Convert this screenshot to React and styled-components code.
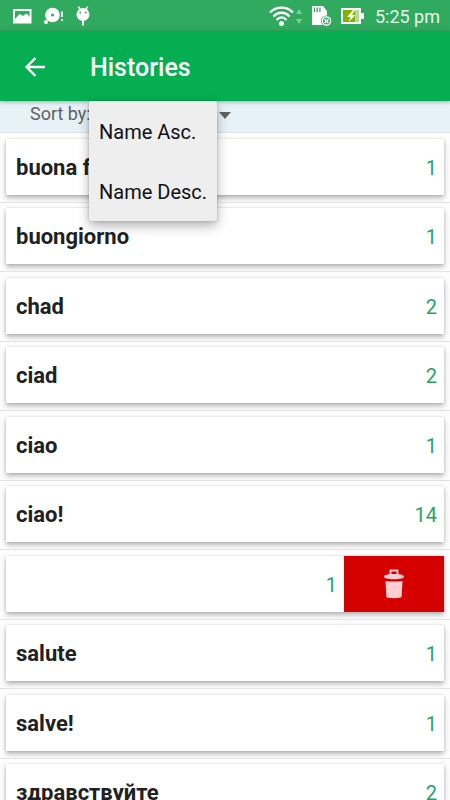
import React, { useState } from 'react';
import styled, { createGlobalStyle } from 'styled-components';

const GlobalStyle = createGlobalStyle`
  * {
    box-sizing: border-box;
  }

  body {
    margin: 0;
    background: #fdfdfd;
    font-family: Roboto, "Noto Sans", sans-serif;
  }

  button {
    border: 0;
    padding: 0;
    background: none;
    font: inherit;
    cursor: pointer;
  }
`;

const Screen = styled.div`
  display: flex;
  flex-direction: column;
  height: 100vh;
  overflow: hidden;
`;

const StatusBar = styled.div`
  display: flex;
  justify-content: space-between;
  align-items: center;
  flex: none;
  height: 31px;
  padding: 0 10px 0 12px;
  background: #30aa5f;
  color: #e8f7ed;

  svg {
    display: block;
  }
`;

const StatusGroup = styled.div`
  display: flex;
  align-items: center;
  gap: ${({ $gap }) => $gap}px;
`;

const Clock = styled.span`
  padding: 2px 0 0 2px;
  font-size: 18px;
  line-height: 22px;
`;

const AppBar = styled.header`
  position: relative;
  z-index: 1;
  display: flex;
  align-items: center;
  flex: none;
  height: 70px;
  padding: 2px 22px 0;
  gap: 42px;
  background: #04ae51;
  color: #fff;
  box-shadow: 0 1px 4px rgba(0, 0, 0, 0.3);
`;

const BackButton = styled.button`
  display: flex;
  color: #fff;
`;

const Title = styled.h1`
  margin: 0;
  padding-top: 2px;
  font-size: 25px;
  font-weight: 500;
  line-height: 30px;
`;

const SortBar = styled.div`
  position: relative;
  z-index: 2;
  display: flex;
  align-items: flex-start;
  flex: none;
  height: 31px;
  padding-left: 30px;
  color: #616161;
  font-size: 18px;
  line-height: 26px;
`;

const SortLabel = styled.span`
  width: 59px;
  white-space: nowrap;
`;

const SortBackground = styled.div`
  flex: none;
  background: #e6f1f8;
`;

const SortPicker = styled.div`
  position: relative;
`;

const SortToggle = styled.button`
  display: flex;
  align-items: center;
  justify-content: flex-end;
  width: 142px;
  height: 28px;
  color: #616161;
`;

const Menu = styled.div`
  position: absolute;
  top: 0;
  left: 0;
  display: flex;
  flex-direction: column;
  border-radius: 2px;
  background: #eee;
  box-shadow: 0 5px 12px rgba(0, 0, 0, 0.3), 0 0 3px rgba(0, 0, 0, 0.2);
`;

const MenuItem = styled.button`
  height: 60px;
  padding: 2px 10px 0;
  color: #111;
  font-size: 20px;
  line-height: 24px;
  text-align: left;
  white-space: nowrap;
`;

const List = styled.ul`
  flex: 1;
  min-height: 0;
  margin: 0;
  padding: 0;
  overflow-y: auto;
  list-style: none;
  scrollbar-width: none;
`;

const Row = styled.li`
  padding: 5px 6px 7px;
  border-top: 1px solid #e2e2e2;

  &:nth-child(odd) {
    padding-top: 6px;
  }
`;

const Card = styled.div`
  display: flex;
  height: 56px;
  background: #fff;
  box-shadow: 0 3px 5px rgba(0, 0, 0, 0.28), 0 0 2px rgba(0, 0, 0, 0.14);
`;

const CardBody = styled.div`
  display: flex;
  flex: 1;
  justify-content: space-between;
  align-items: center;
  padding: 2px 7px 0 10px;
`;

const Word = styled.span`
  color: #212121;
  font-size: 22px;
  font-weight: 700;
  line-height: 28px;
`;

const Count = styled.span`
  color: #1fa566;
  font-size: 20px;
  line-height: 24px;
`;

const DeleteButton = styled.button`
  display: flex;
  align-items: center;
  justify-content: center;
  width: 100px;
  background: #d50000;
`;

const histories = [
  { word: 'buona fortuna', count: 1 },
  { word: 'buongiorno', count: 1 },
  { word: 'chad', count: 2 },
  { word: 'ciad', count: 2 },
  { word: 'ciao', count: 1 },
  { word: 'ciao!', count: 14 },
  { word: '', count: 1, swiped: true },
  { word: 'salute', count: 1 },
  { word: 'salve!', count: 1 },
  { word: 'здравствуйте', count: 2 },
];

const PictureIcon = () => (
  <svg width="20" height="16" viewBox="0 0 20 16">
    <path fill="#fff" fillRule="evenodd" d="M1 1h18.500v14.500H1zM3 3v8l3.500-4c1-1 2-1 3 0l1.500 1 2.500-2c1-.6 1.600-.4 2.300.4L17.500 9V3z" />
  </svg>
);

const DiscIcon = () => (
  <svg width="20" height="18" viewBox="0 0 20 18">
    <circle cx="8.500" cy="8" r="7.300" fill="#fff" />
    <circle cx="8.500" cy="8" r="1.500" fill="#30aa5f" />
    <circle cx="2" cy="15" r="2" fill="#fff" />
    <path fill="#fff" d="M17 4.500h1.800v5.500H17zM17 12h1.800v2H17z" />
  </svg>
);

const DroidIcon = () => (
  <svg width="14" height="20" viewBox="0 0 14 20">
    <path stroke="#fff" strokeWidth="1.400" strokeLinecap="round" d="M2.500 1l2 3M11.500 1l-2 3" />
    <circle cx="7" cy="8.500" r="6.500" fill="#fff" />
    <circle cx="4.200" cy="6.500" r="0.900" fill="#30aa5f" />
    <circle cx="9.800" cy="6.500" r="0.900" fill="#30aa5f" />
    <path stroke="#fff" strokeWidth="2" d="M7 15v4.500" />
  </svg>
);

const WifiIcon = () => (
  <svg width="34" height="22" viewBox="0 0 34 22">
    <g fill="none" stroke="#fff" strokeWidth="2.300">
      <path d="M1 7.500c6-6.500 17-6.500 23 0" />
      <path d="M4.500 11.500c4.500-5 11.500-5 16 0" />
      <path d="M7.500 15c3-3.500 7-3.500 10 0" />
    </g>
    <circle cx="12.500" cy="18.500" r="2.500" fill="#fff" />
    <path fill="#85cda0" d="M30 4l3 5h-6zM30 19l3-5h-6z" />
  </svg>
);

const CardIcon = () => (
  <svg width="21" height="22" viewBox="0 0 21 22">
    <path fill="#fff" d="M1 1h11l4 5v14H1z" />
    <path stroke="#30aa5f" strokeWidth="1.300" d="M3.500 2.500v4.500M6.200 2.500v4.500M8.900 2.500v4.500" />
    <circle cx="15.500" cy="16" r="5.500" fill="#30aa5f" />
    <circle cx="15.500" cy="16" r="4.800" fill="#fff" />
    <circle cx="15.500" cy="16" r="3.500" fill="#30aa5f" />
    <path stroke="#fff" strokeWidth="1.500" d="M13.500 14l4 4M17.500 14l-4 4" />
  </svg>
);

const BatteryIcon = () => (
  <svg width="25" height="18" viewBox="0 0 25 18">
    <path fill="#fff" d="M1 1h20v5h3v6h-3v5H1z" />
    <path fill="#7cb500" d="M3 3h12v12H3z" />
    <path fill="#b2d9a0" d="M15 3h4v12h-4z" />
    <path fill="#fff" d="M13 3l-6 7h3.500l-2 5 7-7H12l3-5z" />
  </svg>
);

const ArrowBackIcon = () => (
  <svg width="26" height="26" viewBox="0 0 26 26">
    <path fill="none" stroke="#fff" strokeWidth="2.400" d="M23 13H5M13.500 4L4.500 13l9 9" />
  </svg>
);

const TrashIcon = () => (
  <svg width="22" height="30" viewBox="0 0 22 30">
    <path
      fill="none"
      stroke="#ffcdd2"
      strokeWidth="1.800"
      d="M7.500 6V1.500h7V6"
    />
    <path
      fill="#ffcdd2"
      d="M1 7.800C1 5.800 5 5 11 5s10 .8 10 2.800c0 1.500-4 2.500-10 2.500S1 9.300 1 7.800zM2.500 12c5.500.8 11.500.8 17 0l-.8 15c-.1 1-.8 1.500-1.700 1.700-4 .6-8 .6-12 0-.9-.2-1.600-.7-1.700-1.700z"
    />
  </svg>
);

const HistoryRow = ({ word, count, swiped }) => (
  <Row>
    <Card>
      <CardBody>
        <Word>{word}</Word>
        <Count>{count}</Count>
      </CardBody>
      {swiped && (
        <DeleteButton type="button" aria-label="Delete">
          <TrashIcon />
        </DeleteButton>
      )}
    </Card>
  </Row>
);

const App = () => {
  const [menuOpen, setMenuOpen] = useState(true);

  return (
    <>
      <GlobalStyle />
      <Screen>
        <StatusBar>
          <StatusGroup $gap={12}>
            <PictureIcon />
            <DiscIcon />
            <DroidIcon />
          </StatusGroup>
          <StatusGroup $gap={8}>
            <WifiIcon />
            <CardIcon />
            <BatteryIcon />
            <Clock>5:25 pm</Clock>
          </StatusGroup>
        </StatusBar>
        <AppBar>
          <BackButton type="button" aria-label="Back">
            <ArrowBackIcon />
          </BackButton>
          <Title>Histories</Title>
        </AppBar>
        <SortBackground>
          <SortBar>
            <SortLabel id="sort-label">Sort by:</SortLabel>
            <SortPicker>
              <SortToggle
                type="button"
                aria-labelledby="sort-label"
                aria-expanded={menuOpen}
                onClick={() => setMenuOpen(!menuOpen)}
              >
                <svg width="12" height="7" viewBox="0 0 12 7">
                  <path fill="#616161" d="M0 0h12L6 7z" />
                </svg>
              </SortToggle>
              {menuOpen && (
                <Menu role="menu">
                  <MenuItem type="button" role="menuitem" onClick={() => setMenuOpen(false)}>
                    Name Asc.
                  </MenuItem>
                  <MenuItem type="button" role="menuitem" onClick={() => setMenuOpen(false)}>
                    Name Desc.
                  </MenuItem>
                </Menu>
              )}
            </SortPicker>
          </SortBar>
        </SortBackground>
        <List>
          {histories.map((item, index) => (
            <HistoryRow key={index} {...item} />
          ))}
        </List>
      </Screen>
    </>
  );
};

export default App;
